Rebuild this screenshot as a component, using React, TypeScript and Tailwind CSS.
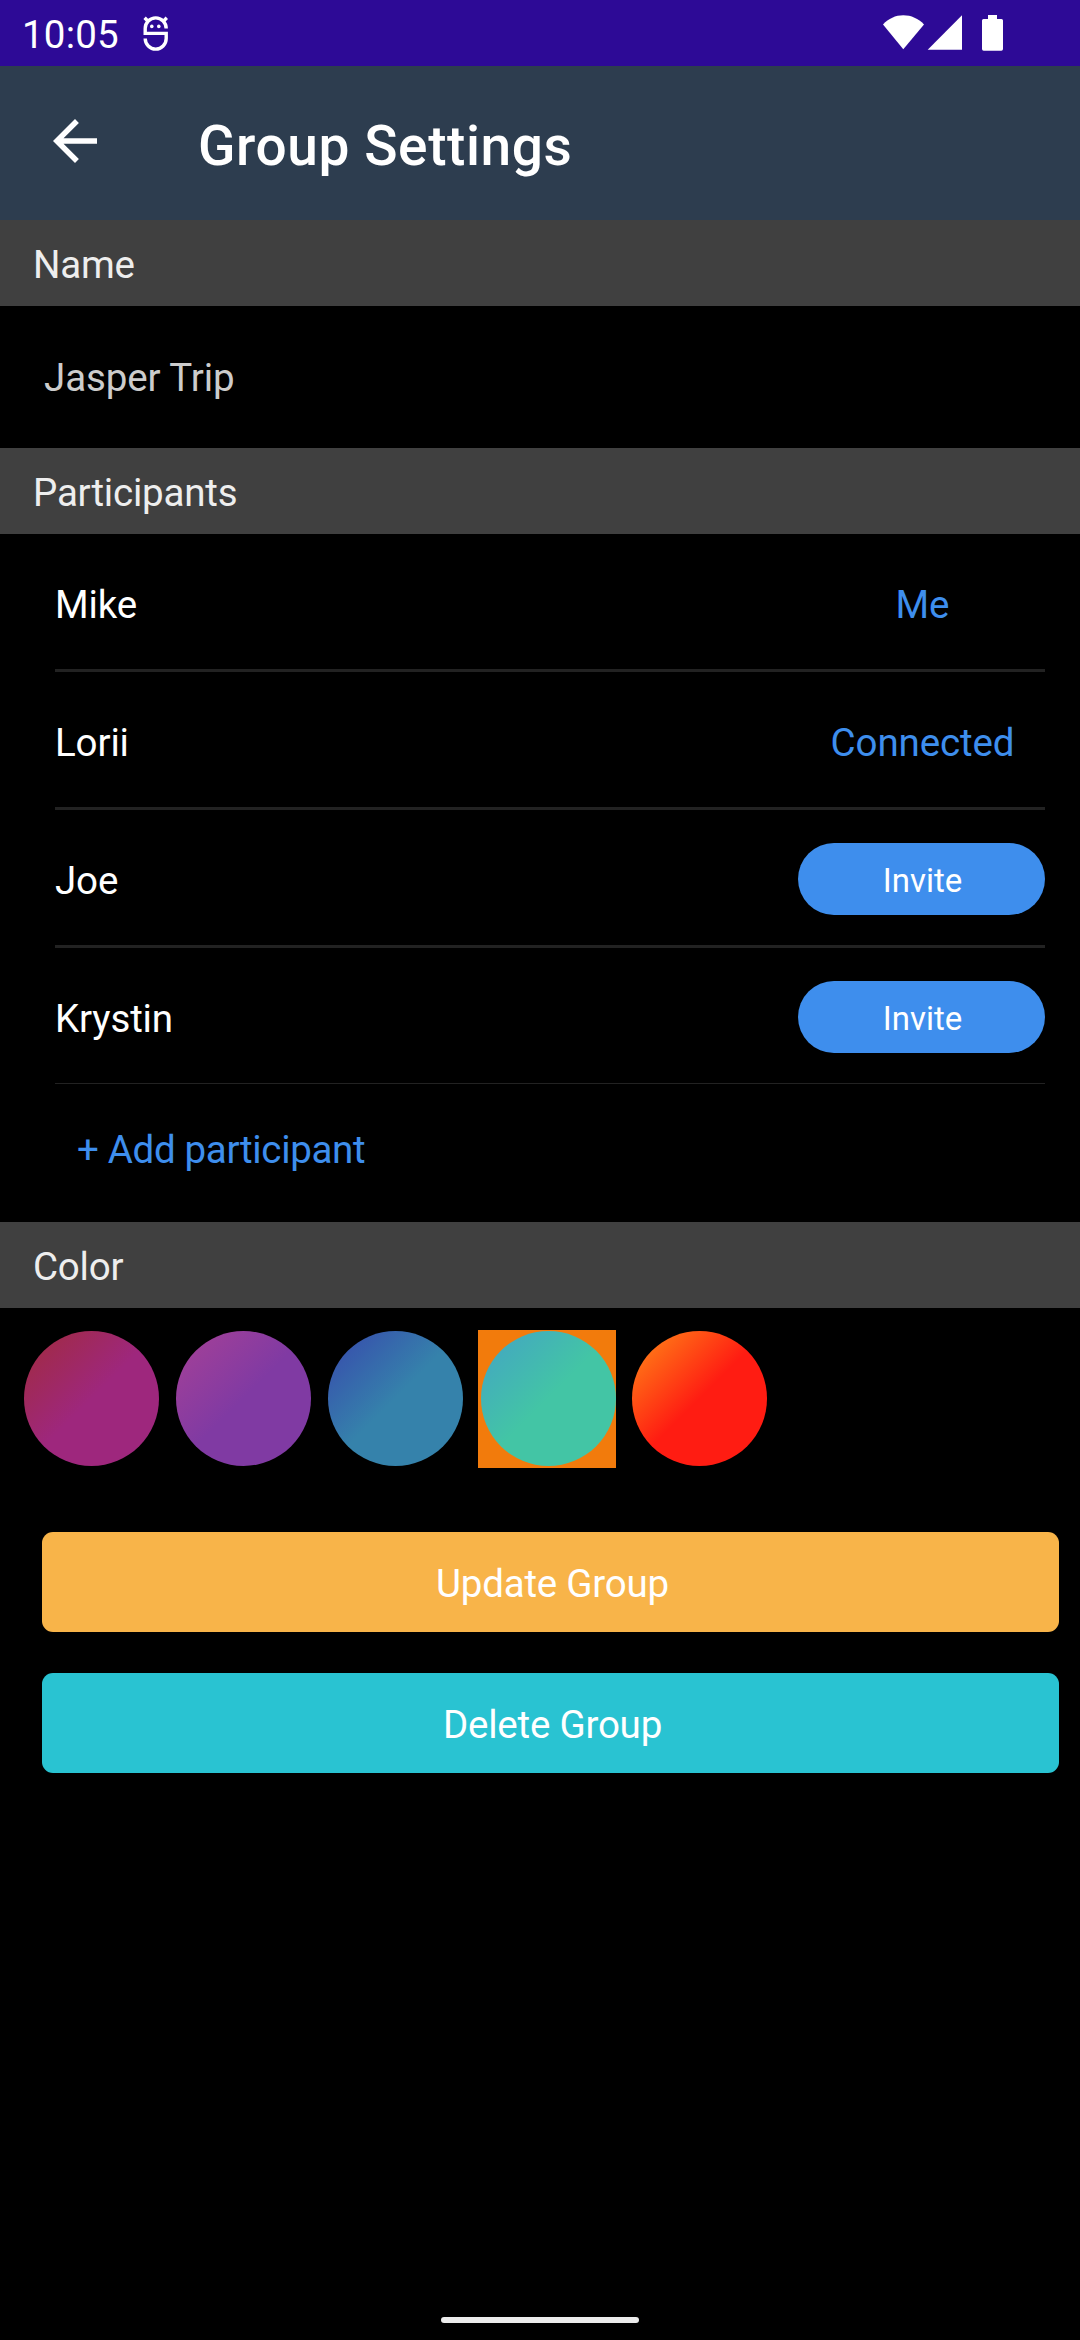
import React from "react";

type Participant = { name: string; status: "Me" | "Connected" | "Invite" };

const participants: Participant[] = [
  { name: "Mike", status: "Me" },
  { name: "Lorii", status: "Connected" },
  { name: "Joe", status: "Invite" },
  { name: "Krystin", status: "Invite" },
];

const swatches = [
  { id: "berry", fill: "bg-[linear-gradient(135deg,#a12b3c_0%,#9e277d_50%)]", selected: false },
  { id: "violet", fill: "bg-[linear-gradient(135deg,#a74196_0%,#803aa3_50%)]", selected: false },
  { id: "ocean", fill: "bg-[linear-gradient(135deg,#3847ad_0%,#3582ab_50%)]", selected: false },
  { id: "mint", fill: "bg-[linear-gradient(135deg,#43a3c5_0%,#43c5a5_50%)]", selected: true },
  { id: "flame", fill: "bg-[linear-gradient(135deg,#ff8d18_0%,#ff1c12_50%)]", selected: false },
];

function StatusBar() {
  return (
    <div className="flex h-[66px] items-start bg-[#2d0a96] pl-[22px] text-white">
      <span className="mt-[2px] w-[118px] leading-[66px] tracking-[0.2px]">10:05</span>
      <svg className="mt-[14px]" width="32" height="40" viewBox="0 0 32 40" fill="none" stroke="white" strokeWidth="3.4">
        <path d="M26.200 14.500A10.500 10.600 0 0 0 5.200 14.500V19.400H26.200V24.500A10.500 10.600 0 0 1 5.200 24.500" />
        <path d="M4.600 3.800L8 7.200M26.800 3.800L23.400 7.200" />
        <circle cx="11.8" cy="12.4" r="1.8" fill="white" stroke="none" />
        <circle cx="18.8" cy="12.4" r="1.8" fill="white" stroke="none" />
      </svg>
      <svg className="mt-[14px] ml-[711px]" width="121" height="38" viewBox="0 0 121 38" fill="white">
        <path d="M20.300 35.300L0 10.400C5.500 4.500 12.500 1.200 20.300 1.200S35.500 4.500 41 10.400Z" />
        <path d="M44.700 35.700H79V1.200Z" />
        <path d="M105 5V1H114V5H118.500A1.500 1.500 0 0 1 120 6.500V35A1.700 1.700 0 0 1 118.300 36.700H100.700A1.700 1.700 0 0 1 99 35V6.500A1.500 1.500 0 0 1 100.500 5Z" />
      </svg>
    </div>
  );
}

function Header() {
  return (
    <header className="flex h-[154px] items-start bg-[#2d3d4f] pl-[42px] text-white">
      <button aria-label="Back" className="mt-[42px]">
        <svg width="66" height="66" viewBox="0 0 24 24" fill="white">
          <path d="M20 11H7.830l5.590-5.590L12 4l-8 8 8 8 1.410-1.410L7.830 13H20v-2z" />
        </svg>
      </button>
      <h1 className="mt-[40px] ml-[90px] text-[55px] leading-[80px] font-medium tracking-[0.6px]">Group Settings</h1>
    </header>
  );
}

function SectionTitle({ children }: { children: React.ReactNode }) {
  return (
    <h2 className="h-[86px] bg-[#404040] pt-[2px] pl-[33px] leading-[86px] tracking-[-0.2px] text-[#eeeeee]">
      {children}
    </h2>
  );
}

function ParticipantRow({ name, status, last }: Participant & { last: boolean }) {
  return (
    <li
      className={
        last
          ? "mr-[35px] ml-[55px] flex h-[136px] items-start justify-between border-b border-[#222222]"
          : "mr-[35px] ml-[55px] flex h-[138px] items-start justify-between border-b-3 border-[#222222]"
      }
    >
      <span className="leading-[142px] tracking-[-0.12px] text-white">{name}</span>
      {status === "Invite" ? (
        <button className="mt-[33px] h-[72px] w-[247px] rounded-full bg-[#3e8eed] pt-[3px] pl-[2px] text-[33px] leading-[69px] text-white">
          {status}
        </button>
      ) : (
        <span className="w-[247px] pl-[2px] text-center leading-[142px] tracking-[-0.12px] text-[#3e8eed]">{status}</span>
      )}
    </li>
  );
}

export default function App() {
  return (
    <div className="flex h-[2340px] w-[1080px] flex-col overflow-hidden bg-black font-['Roboto',sans-serif] text-[38.5px]">
      <StatusBar />
      <Header />
      <SectionTitle>Name</SectionTitle>
      <p className="h-[142px] pt-[2px] pl-[44px] leading-[140px] tracking-[-0.1px] text-[#cccccc]">Jasper Trip</p>
      <SectionTitle>Participants</SectionTitle>
      <ul>
        {participants.map((p, i) => (
          <ParticipantRow key={p.name} {...p} last={i === participants.length - 1} />
        ))}
      </ul>
      <button className="flex h-[138px] items-start pl-[77px] leading-[132px] tracking-[-0.33px] text-[#3e8eed]">
        + Add participant
      </button>
      <SectionTitle>Color</SectionTitle>
      <div className="flex gap-[14px] pt-[22px] pl-[22px]">
        {swatches.map((s) => (
          <button
            key={s.id}
            aria-label={s.id}
            className={
              s.selected
                ? "flex size-[138px] items-center justify-center bg-[#f27b0c] pb-px pl-[2px]"
                : "flex size-[138px] items-center justify-center pb-px"
            }
          >
            <span className={`block size-[135px] rounded-full ${s.fill}`} />
          </button>
        ))}
      </div>
      <div className="mt-[64px] mr-[21px] ml-[42px] flex flex-col gap-[41px] tracking-[-0.22px] text-white">
        <button className="h-[100px] rounded-[11px] bg-[#f8b449] pt-[4px] pl-[4px] leading-[96px]">Update Group</button>
        <button className="h-[100px] rounded-[11px] bg-[#29c3d2] pt-[4px] pl-[4px] leading-[96px]">Delete Group</button>
      </div>
      <div className="mx-auto mt-auto mb-[17px] h-[6px] w-[198px] rounded-full bg-[#ebebeb]" />
    </div>
  );
}
